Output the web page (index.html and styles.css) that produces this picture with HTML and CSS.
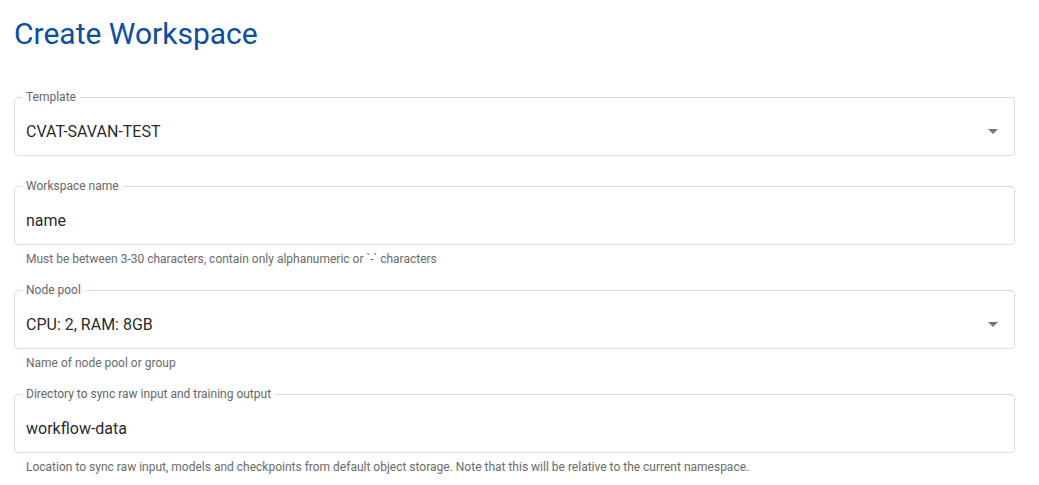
FILE: index.html
```html
<!DOCTYPE html>
<html>
<head>
<meta charset="utf-8">
<link rel="stylesheet" href="styles.css">
</head>
<body>
<main class="page">
  <h1 class="title">Create Workspace</h1>
  <form class="form">
    <div class="field">
      <fieldset class="box">
        <legend class="label">Template</legend>
        <div class="value">CVAT-SAVAN-TEST</div>
        <svg class="arrow" width="10" height="5" viewBox="0 0 10 5"><path d="M0 0h10L5 5z" fill="#757575"/></svg>
      </fieldset>
    </div>
    <div class="field">
      <fieldset class="box">
        <legend class="label">Workspace name</legend>
        <div class="value">name</div>
      </fieldset>
      <p class="helper">Must be between 3-30 characters, contain only alphanumeric or `-` characters</p>
    </div>
    <div class="field">
      <fieldset class="box">
        <legend class="label">Node pool</legend>
        <div class="value">CPU: 2, RAM: 8GB</div>
        <svg class="arrow" width="10" height="5" viewBox="0 0 10 5"><path d="M0 0h10L5 5z" fill="#757575"/></svg>
      </fieldset>
      <p class="helper">Name of node pool or group</p>
    </div>
    <div class="field">
      <fieldset class="box">
        <legend class="label">Directory to sync raw input and training output</legend>
        <div class="value">workflow-data</div>
      </fieldset>
      <p class="helper">Location to sync raw input, models and checkpoints from default object storage. Note that this will be relative to the current namespace.</p>
    </div>
  </form>
</main>
</body>
</html>
```

FILE: styles.css
```css
* { box-sizing: border-box; }
html, body { margin: 0; padding: 0; background: #fff; }
body { font-family: Roboto, "Liberation Sans", sans-serif; }
.page { padding: 0 24px 0 14px; }
.title {
  margin: 0;
  padding-top: 16px;
  font-size: 30px;
  font-weight: 400;
  line-height: 36px;
  color: #0d4ea3;
}
.form {
  margin-top: 38px;
  display: flex;
  flex-direction: column;
}
.field { display: flex; flex-direction: column; margin-bottom: 23px; }
.box {
  margin: 0;
  border: 1px solid #dcdcdc;
  border-radius: 4px;
  padding: 18px 40px 14px 11px;
  display: flex;
  align-items: center;
  justify-content: space-between;
  min-width: 0;
}
.label {
  margin-left: -4px;
  padding: 0 4px;
  font-size: 12px;
  line-height: 14px;
  color: #666;
}
.value {
  font-size: 16px;
  line-height: 19px;
  color: rgba(0,0,0,0.87);
}
.arrow { margin-right: -24px; display: block; }
.helper {
  margin: 7px 0 -6px 12px;
  font-size: 12px;
  line-height: 14px;
  color: #6b6b6b;
}
```
